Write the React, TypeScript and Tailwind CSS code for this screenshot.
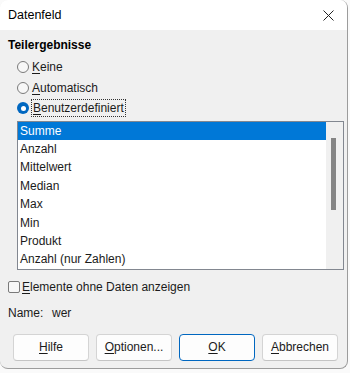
import React from 'react';

const items = ['Summe', 'Anzahl', 'Mittelwert', 'Median', 'Max', 'Min', 'Produkt', 'Anzahl (nur Zahlen)'];

function Radio({ checked, label, focus }: { checked?: boolean; label: React.ReactNode; focus?: boolean }) {
  return (
    <div className="flex h-[20.5px] items-center pl-[9px]">
      {checked ? (
        <span className="flex h-[12px] w-[12px] items-center justify-center rounded-full bg-[#0067c0]">
          <span className="h-[5px] w-[5px] rounded-full bg-white" />
        </span>
      ) : (
        <span className="h-[12px] w-[12px] rounded-full border border-[#7a7a7a] bg-[#f7f7f7]" />
      )}
      <span
        className={
          focus
            ? 'ml-[2px] border border-dotted border-[#333] px-[1px] leading-[16px]'
            : 'ml-[3px] leading-[16px]'
        }
      >
        {label}
      </span>
    </div>
  );
}

function Btn({ children, def }: { children: React.ReactNode; def?: boolean }) {
  return (
    <div
      className={
        'flex h-[27px] w-[76px] items-center justify-center rounded-[4px] bg-[#fdfdfd] ' +
        (def ? 'border border-[#0067c0]' : 'border border-[#d4d4d4] border-b-[#c4c4c4]')
      }
    >
      {children}
    </div>
  );
}

const U = ({ children }: { children: React.ReactNode }) => (
  <span className="underline decoration-1 underline-offset-[2px]">{children}</span>
);

export default function App() {
  return (
    <div
      className="h-[373px] w-[350px] overflow-hidden bg-[#fafafa] text-[12px] text-[#1b1b1b]"
      style={{ fontFamily: '"Liberation Sans", Arial, sans-serif' }}
    >
      <div className="h-[369px] w-[348px] overflow-hidden rounded-[8px] border-r border-b border-[#9c9c9c] bg-[#f0f0f0]">
        <div className="flex h-[30px] items-center justify-between bg-white pl-[8px] pr-[12px]">
          <span className="text-[12.5px] text-black">Datenfeld</span>
          <svg width="11" height="11" viewBox="0 0 11 11" className="mr-[1px]">
            <path d="M0.5 0.5 L10.5 10.5 M10.5 0.5 L0.5 10.5" stroke="#222" strokeWidth="1" fill="none" />
          </svg>
        </div>
        <div className="px-[8px] pt-[6px]">
          <div className="h-[18px] font-bold leading-[18px] text-black">Teilergebnisse</div>
          <div className="mt-[3px]">
            <Radio label={<><U>K</U>eine</>} />
            <Radio label={<><U>A</U>utomatisch</>} />
            <Radio checked focus label={<><U>B</U>enutzerdefiniert</>} />
          </div>
          <div className="ml-[9px] mt-[2px] flex h-[149px] w-[327px] border border-[#828790] bg-white">
            <div className="flex-1">
              {items.map((it, i) => (
                <div
                  key={it}
                  className={
                    'flex h-[18.4px] items-center pl-[2px] ' +
                    (i === 0 ? 'bg-[#0078d7] text-white' : '')
                  }
                >
                  {it}
                </div>
              ))}
            </div>
            <div className="w-[17px] bg-[#f0f0f0] pl-[5px] pt-[16px]">
              <div className="h-[72px] w-[5px] bg-[#858585]" />
            </div>
          </div>
          <div className="mt-[8px] flex h-[18px] items-center">
            <span className="h-[12px] w-[12px] rounded-[2px] border border-[#7a7a7a] bg-[#f7f7f7]" />
            <span className="ml-[2px]">
              <U>E</U>lemente ohne Daten anzeigen
            </span>
          </div>
          <div className="mt-[8px] flex h-[18px] items-center">
            <span className="w-[44px]">Name:</span>
            <span>wer</span>
          </div>
          <div className="ml-[5px] mt-[12px] flex gap-[7px]">
            <Btn><U>H</U>ilfe</Btn>
            <Btn><U>O</U>ptionen...</Btn>
            <Btn def><U>O</U>K</Btn>
            <Btn><U>A</U>bbrechen</Btn>
          </div>
        </div>
      </div>
    </div>
  );
}
